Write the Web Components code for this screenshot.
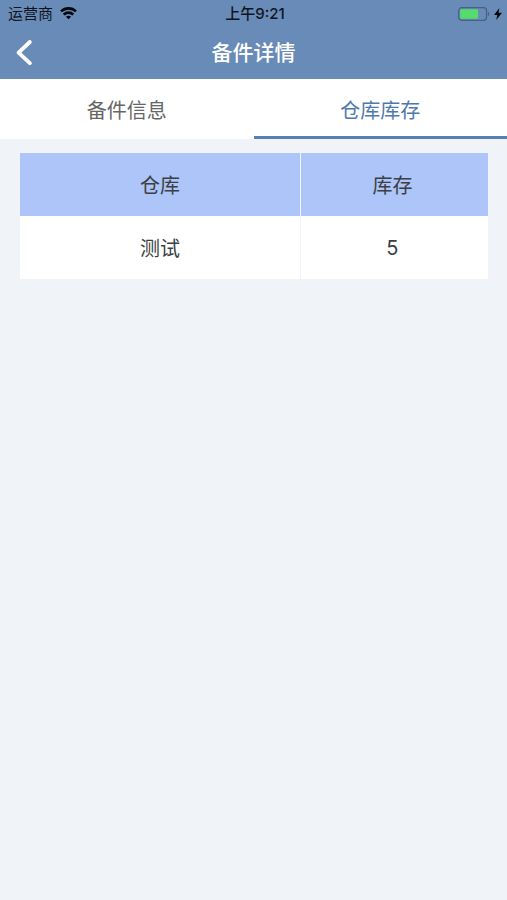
<!DOCTYPE html>
<html lang="zh-CN">
<head>
<meta charset="utf-8">
<meta name="viewport" content="width=device-width, initial-scale=1">
<title>备件详情</title>
<style>
    body {
        margin: 0;
        min-height: 100vh;
        background-color: #f0f3f7;
        color: #3c3f44;
        font-family: Inter, "Noto Sans CJK SC", sans-serif;
        font-size: 20px;
    }
</style>
</head>
<body>
<status-bar>
    <span slot="carrier">运营商</span>
    <span slot="time">上午9:21</span>
</status-bar>
<nav-bar>备件详情</nav-bar>
<tab-bar>
    <tab-item>备件信息</tab-item>
    <tab-item active>仓库库存</tab-item>
</tab-bar>
<stock-table data-columns="仓库,库存" data-rows="测试,5"></stock-table>

<script>
function createTemplate(html) {
    const template = document.createElement('template');
    template.innerHTML = html;
    return template;
}

const statusTemplate = createTemplate(`
    <style>
    :host {
        display: grid;
        grid-template-columns: 1fr auto 1fr;
        align-items: center;
        height: 27px;
        padding: 0 5px 0 8px;
        background-color: #698bb7;
        color: #10151d;
        font-size: 15px;
        line-height: 27px;
    }

    .left,
    .right {
        display: flex;
        align-items: center;
        gap: 7px;
    }

    .right {
        justify-content: flex-end;
        gap: 3px;
    }

    .time {
        font-weight: 500;
    }
    </style>
    <div class="left">
        <slot name="carrier"></slot>
        <svg width="17" height="13" viewBox="0 0 17 13" fill="none" stroke="#05080c" stroke-width="2.6" aria-hidden="true">
            <path d="M1 4.4C5.2 .3 11.8 .3 16 4.4" />
            <path d="M3.7 7.6C6.4 5 10.6 5 13.3 7.6" />
            <path d="M8.5 12.3L5.9 9.7C7.3 8.3 9.7 8.3 11.1 9.7Z" fill="#05080c" stroke="none" />
        </svg>
    </div>
    <div class="time"><slot name="time"></slot></div>
    <div class="right">
        <svg width="33" height="14" viewBox="0 0 33 14" aria-hidden="true">
            <rect x=".7" y=".7" width="27.8" height="12.6" rx="3" fill="none" stroke="#47617f" stroke-width="1.2" />
            <rect x="2.2" y="2.2" width="17.8" height="9.6" rx="1.4" fill="#55dc6c" />
            <path d="M29.9 4.8C31.7 5.4 31.7 8.6 29.9 9.2Z" fill="#47617f" />
        </svg>
        <svg width="8" height="12" viewBox="0 0 8 12" aria-hidden="true">
            <path d="M5.4 0L0 6.9H3.3L2.2 12L8 4.8H4.5Z" fill="#05080c" />
        </svg>
    </div>
`);

class StatusBar extends HTMLElement {
    constructor() {
        super();
        this.attachShadow({ mode: 'open' });
        this.shadowRoot.appendChild(statusTemplate.content.cloneNode(true));
    }
}

const navTemplate = createTemplate(`
    <style>
    :host {
        display: grid;
        grid-template-columns: 48px 1fr 48px;
        align-items: center;
        height: 52px;
        background-color: #698bb7;
        color: #ffffff;
    }

    .back {
        display: flex;
        align-items: center;
        justify-content: center;
        height: 48px;
        padding: 0;
        border: none;
        background: none;
        cursor: pointer;
    }

    .title {
        margin: 0;
        font-size: 21px;
        font-weight: 500;
        line-height: 48px;
        text-align: center;
    }
    </style>
    <button class="back" type="button" aria-label="返回">
        <svg width="16" height="26" viewBox="0 0 16 26" fill="none" stroke="#ffffff" stroke-width="3.8" stroke-linecap="round" stroke-linejoin="round">
            <path d="M13.8 2L2.6 12.6L13.8 23.2" />
        </svg>
    </button>
    <h1 class="title"><slot></slot></h1>
`);

class NavBar extends HTMLElement {
    constructor() {
        super();
        this.attachShadow({ mode: 'open' });
        this.shadowRoot.appendChild(navTemplate.content.cloneNode(true));
    }

    connectedCallback() {
        this.shadowRoot
            .querySelector('.back')
            .addEventListener('click', () => history.back());
    }
}

const tabBarTemplate = createTemplate(`
    <style>
    :host {
        display: flex;
        background-color: #ffffff;
    }
    </style>
    <slot></slot>
`);

class TabBar extends HTMLElement {
    constructor() {
        super();
        this.attachShadow({ mode: 'open' });
        this.shadowRoot.appendChild(tabBarTemplate.content.cloneNode(true));
    }

    connectedCallback() {
        this.addEventListener('click', (event) => {
            const selected = event.target.closest('tab-item');
            if (!selected) {
                return;
            }
            this.querySelectorAll('tab-item').forEach((item) => {
                item.toggleAttribute('active', item === selected);
            });
        });
    }
}

const tabItemTemplate = createTemplate(`
    <style>
    :host {
        display: block;
        flex: 1;
    }

    .tab {
        display: block;
        width: 100%;
        height: 60px;
        padding: 3px 0 0;
        border: none;
        border-bottom: 3px solid transparent;
        background: none;
        color: #666666;
        font: inherit;
        cursor: pointer;
    }

    :host([active]) .tab {
        border-bottom-color: #5580b4;
        color: #4f79ae;
    }
    </style>
    <button class="tab" type="button"><slot></slot></button>
`);

class TabItem extends HTMLElement {
    constructor() {
        super();
        this.attachShadow({ mode: 'open' });
        this.shadowRoot.appendChild(tabItemTemplate.content.cloneNode(true));
    }
}

class StockTable extends HTMLElement {
    constructor() {
        super();
        this.attachShadow({ mode: 'open' });
    }

    connectedCallback() {
        const columns = this.dataset.columns.split(',');
        const rows = this.dataset.rows.split(';').map((row) => row.split(','));
        const template = createTemplate(`
            <style>
            :host {
                display: block;
                padding: 14px 19px 14px 20px;
            }

            .table {
                width: 100%;
                table-layout: fixed;
                border-spacing: 0;
                font-size: 20px;
            }

            .cell {
                box-sizing: border-box;
                height: 63px;
                padding: 0 4px 0 0;
                background-color: #ffffff;
                font-weight: 400;
                text-align: center;
            }

            .cell:first-child {
                width: 60%;
                padding: 0;
                border-right: 1px solid #f3f5f8;
            }

            .cell-head {
                background-color: #adc5f8;
            }
            </style>
            <table class="table">
                <thead>
                    <tr>${createCells(columns, 'th')}</tr>
                </thead>
                <tbody>
                    ${rows.map((row) => `<tr>${createCells(row, 'td')}</tr>`).join('\n')}
                </tbody>
            </table>
        `);
        this.shadowRoot.replaceChildren(template.content.cloneNode(true));
    }
}

function createCells(values, tag) {
    const attrs = tag === 'th' ? 'class="cell cell-head" scope="col"' : 'class="cell"';
    return values.map((value) => `<${tag} ${attrs}>${value}</${tag}>`).join('');
}

customElements.define('status-bar', StatusBar);
customElements.define('nav-bar', NavBar);
customElements.define('tab-bar', TabBar);
customElements.define('tab-item', TabItem);
customElements.define('stock-table', StockTable);
</script>
</body>
</html>
